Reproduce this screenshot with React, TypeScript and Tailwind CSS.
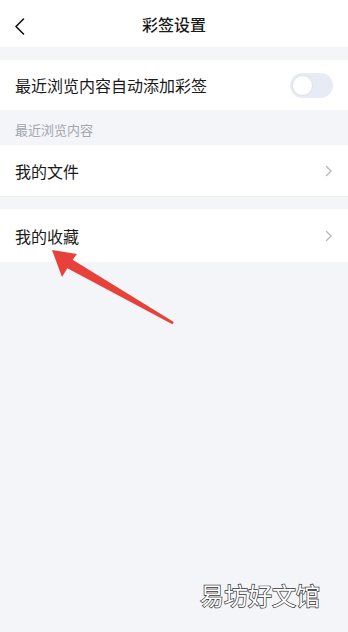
import React from "react";

const font = { fontFamily: '"Noto Sans CJK SC", "Noto Sans", sans-serif' };

function Chevron() {
  return (
    <svg width="8" height="12" viewBox="0 0 8 12" className="mr-[15px]">
      <path d="M1.5 1.5 L6 6 L1.5 10.5" fill="none" stroke="#b4b7bd" strokeWidth="1.3" strokeLinecap="round" strokeLinejoin="round" />
    </svg>
  );
}

export default function App() {
  return (
    <div className="relative w-[348px] h-[632px] bg-[#f3f5f9] overflow-hidden text-[#1a1a1a] font-['Noto_Sans_CJK_SC',sans-serif]" style={font}>
      <div className="h-[47px] bg-white flex items-center relative">
        <svg width="12" height="18" viewBox="0 0 12 18" className="absolute left-[14px] top-[18px]">
          <path d="M9.5 1 L2 8.5 L9.5 16" fill="none" stroke="#111" strokeWidth="1.6" strokeLinecap="round" strokeLinejoin="round" />
        </svg>
        <div className="flex-1 text-center text-[16px] font-medium leading-none">彩签设置</div>
      </div>
      <div className="h-[13px]" />
      <div className="h-[50px] bg-white flex items-center justify-between pl-[15px] pr-[15px]">
        <span className="text-[16px] leading-none">最近浏览内容自动添加彩签</span>
        <div className="w-[43px] h-[25px] rounded-full bg-[#e7ebf4] flex items-center px-[2px]">
          <div className="w-[21px] h-[21px] rounded-full bg-white border border-[#dde1e8]" />
        </div>
      </div>
      <div className="h-[35px] flex items-center pl-[15px] pt-[4px] text-[13px] text-[#a2a6ad] leading-none">最近浏览内容</div>
      <div className="h-[52px] bg-white flex items-center justify-between pl-[15px] border-b border-[#eceef2]">
        <span className="text-[16px] leading-none">我的文件</span>
        <Chevron />
      </div>
      <div className="h-[12px]" />
      <div className="h-[53px] bg-white flex items-center justify-between pl-[15px]">
        <span className="text-[16px] leading-none">我的收藏</span>
        <Chevron />
      </div>
      <svg className="absolute left-0 top-0 pointer-events-none" width="348" height="632" viewBox="0 0 348 632">
        <polygon
          points="52,250 77,254 72.6,259.7 173.8,322 172.4,324.2 67.4,268.3 62,277"
          fill="#e8403a"
        />
      </svg>
      <div
        className="absolute left-[200px] top-[583px] text-[24px] leading-none text-white [-webkit-text-stroke:1.4px_#333] [paint-order:stroke_fill]"
      >
        易坊好文馆
      </div>
    </div>
  );
}
